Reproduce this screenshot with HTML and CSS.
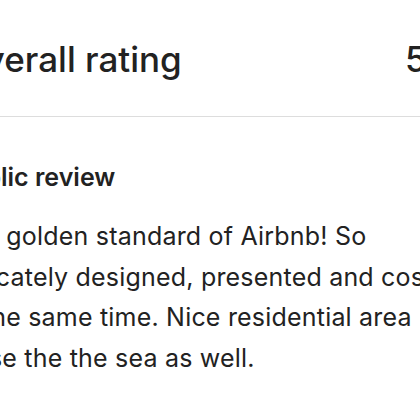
FILE: index.html
```html
<!DOCTYPE html>
<html lang="en">
<head>
  <meta charset="UTF-8">
  <title>Review details</title>
  <link rel="stylesheet" href="styles.css">
</head>
<body>

  <div class="sheet">
    <div class="rating-row">
      <h1 class="rating-title">Overall rating</h1>
      <span class="rating-score">5.0</span>
    </div>

    <div class="review">
      <h2 class="review-title">Public review</h2>
      <p class="review-text">The golden standard of Airbnb! So delicately designed, presented and cosy at the same time. Nice residential area close the the sea as well.</p>
    </div>
  </div>

</body>
</html>
```

FILE: styles.css
```css
body {
  margin: 0;
  overflow: hidden;
  background: #fff;
  color: #222;
  font-family: Inter, "Noto Sans", sans-serif;
}
.sheet {
  margin-left: -42px;
  width: 500px;
}
.rating-row {
  display: flex;
  justify-content: space-between;
  align-items: baseline;
  padding: 37px 0 35px 0;
  border-bottom: 1px solid #ddd;
}
.rating-title {
  margin: 0;
  font-size: 35px;
  line-height: 44px;
  font-weight: 500;
}
.rating-score {
  font-size: 35px;
  line-height: 44px;
  font-weight: 500;
}
.review {
  padding-top: 45px;
}
.review-title {
  margin: 0 0 0 -4px;
  font-size: 25px;
  line-height: 30px;
  font-weight: 600;
}
.review-text {
  margin: 24px 0 0 -5px;
  width: 505px;
  font-size: 25px;
  line-height: 40.5px;
  letter-spacing: 0.2px;
}
```
